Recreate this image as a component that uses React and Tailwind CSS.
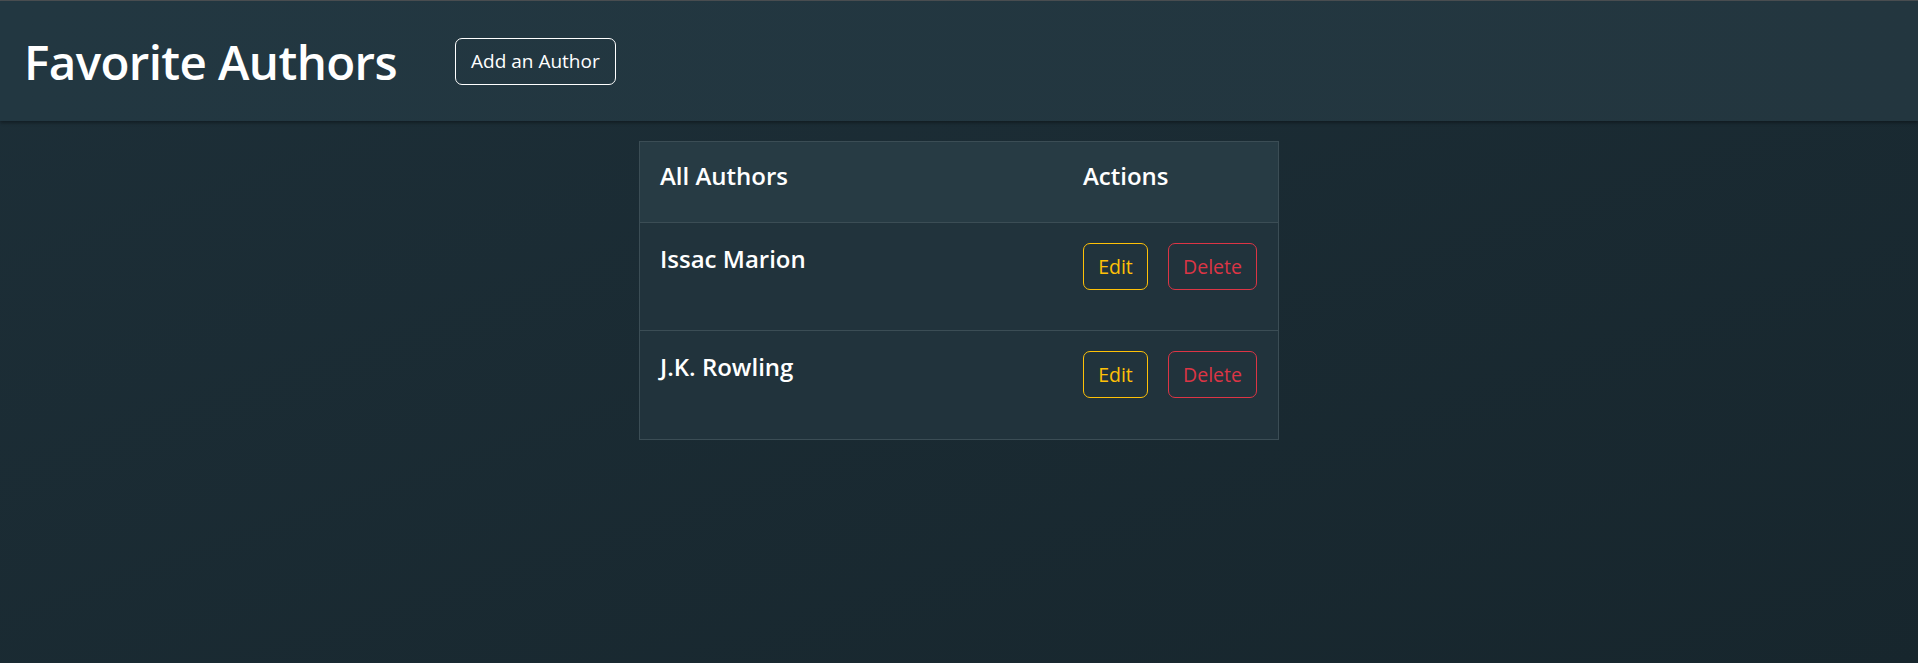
import React from "react";

const authors = [
  { id: 1, name: "Issac Marion" },
  { id: 2, name: "J.K. Rowling" },
];

export default function App() {
  return (
    <div
      className="min-h-screen bg-gradient-to-br from-[#1d2f38] to-[#17262d] text-white border-t border-[#4b4f52]"
      style={{ fontFamily: '"Open Sans", "Noto Sans", sans-serif' }}
    >
      <header className="h-[120px] flex items-center px-[24px] bg-gradient-to-r from-[#223741] to-[#23363f] shadow-[0_2px_3px_rgba(0,0,0,0.35)]">
        <h1 className="text-[47.5px] font-semibold leading-[1.2] tracking-[-0.6px]">Favorite Authors</h1>
        <button className="ml-[58px] h-[47px] px-[15px] border border-white rounded-[7px] text-[19px] text-white">
          Add an Author
        </button>
      </header>

      <main className="flex justify-center pt-[20px]">
        <div className="w-[640px] border border-[#3b4d55]">
          <div className="flex h-[81px] bg-[#273b44] border-b border-[#3b4d55] pt-[20px] px-[20px]">
            <div className="flex-1 text-[24px] font-semibold leading-[1.2]">All Authors</div>
            <div className="w-[175px] text-[24px] font-semibold leading-[1.2]">Actions</div>
          </div>
          {authors.map((a, i) => (
            <div
              key={a.id}
              className={
                "flex h-[108px] bg-[#21333c] pt-[20px] px-[20px] " +
                (i < authors.length - 1 ? "border-b border-[#3b4d55]" : "")
              }
            >
              <div className="flex-1 text-[24px] font-semibold leading-[1.2] pt-[2px]">{a.name}</div>
              <div className="w-[175px] flex gap-[20px]">
                <button className="h-[47px] w-[65px] border border-[#ffc107] text-[#ffc107] rounded-[7px] text-[19.5px]">
                  Edit
                </button>
                <button className="h-[47px] w-[89px] border border-[#dc3545] text-[#dc3545] rounded-[7px] text-[19.5px]">
                  Delete
                </button>
              </div>
            </div>
          ))}
        </div>
      </main>
    </div>
  );
}
